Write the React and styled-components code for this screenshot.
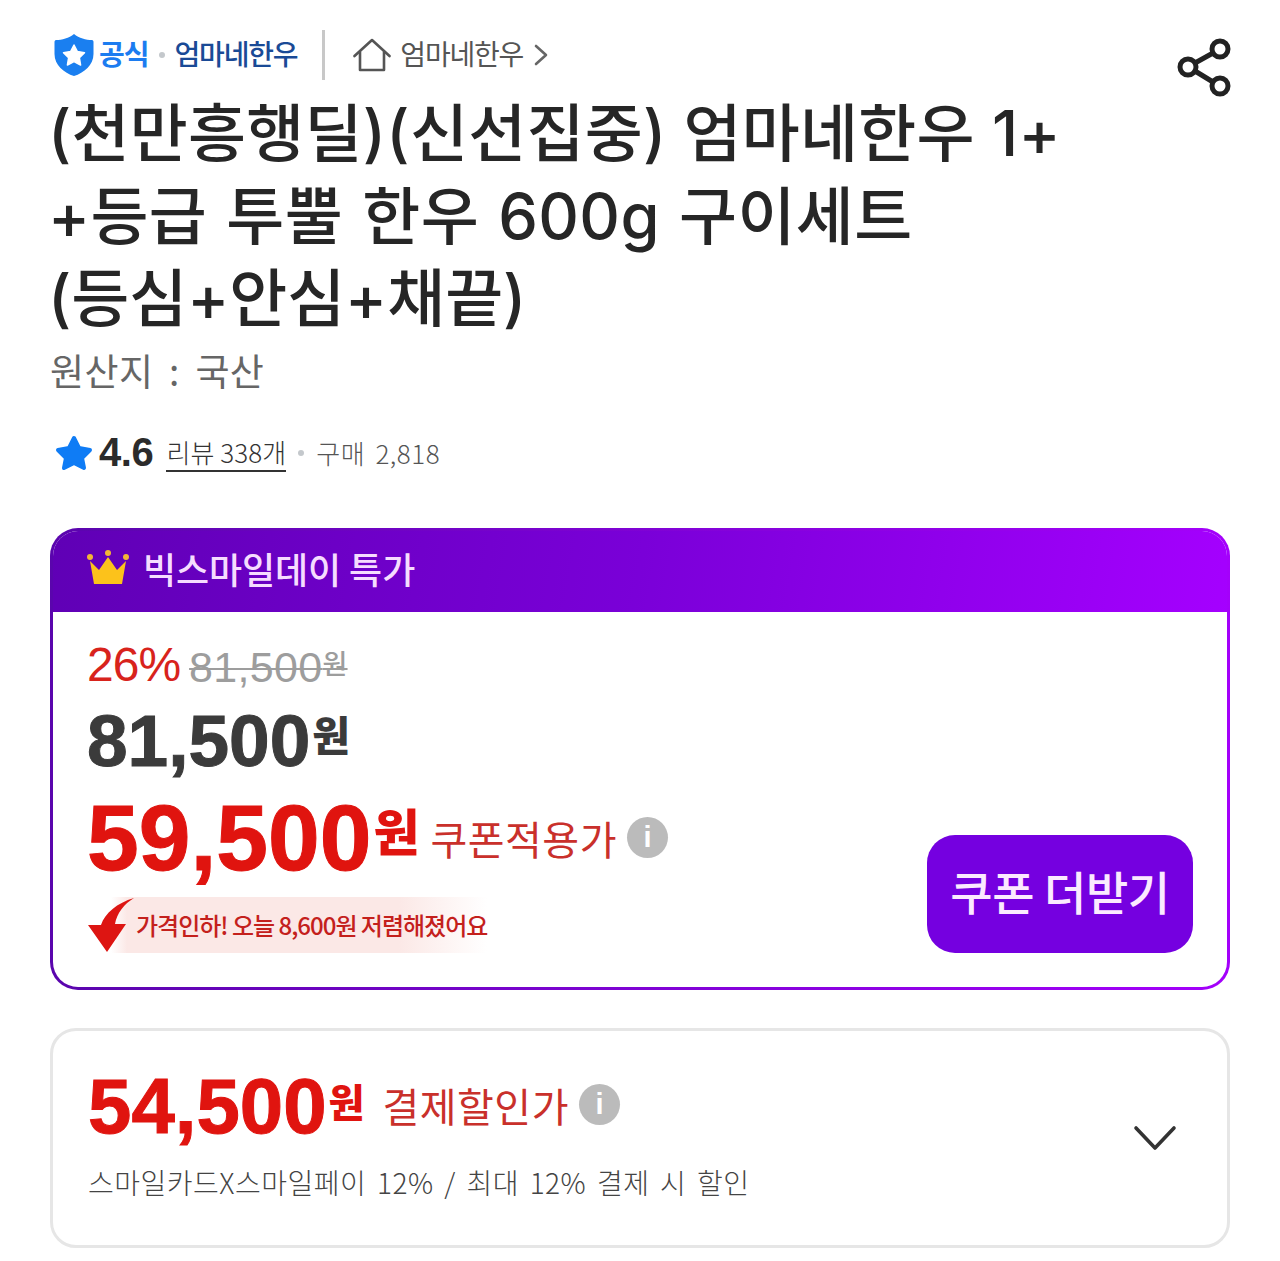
import React from 'react';
import styled, { createGlobalStyle } from 'styled-components';

const GlobalStyle = createGlobalStyle`
  html, body { margin: 0; padding: 0; background: #fff; }
  body { font-family: "Noto Sans CJK KR", "Noto Sans", sans-serif; }
`;

const Page = styled.div`
  width: 1280px;
  height: 1261px;
  box-sizing: border-box;
  padding: 28px 50px 0;
  overflow: hidden;
`;

const TopRow = styled.div`
  display: flex;
  align-items: center;
  height: 54px;
  padding-left: 4px;
`;

const TopText = styled.span`
  margin-top: -4px;
  font-size: 28px;
  letter-spacing: -1px;
  white-space: nowrap;
`;

const OfficialLabel = styled(TopText)`
  margin-left: 5px;
  font-weight: 700;
  color: #1c7cf0;
`;

const SmallDot = styled.span`
  width: 6px;
  height: 6px;
  margin: ${(p) => p.$margin || '0 10px'};
  border-radius: 50%;
  background: #c4c8cc;
`;

const BrandName = styled(TopText)`
  font-weight: 500;
  letter-spacing: -1.2px;
  color: #1a4a96;
`;

const Divider = styled.span`
  width: 3px;
  height: 50px;
  margin: 0 28px 0 25px;
  background: #c8c8c8;
`;

const StoreName = styled(TopText)`
  margin-left: 9px;
  font-weight: 400;
  letter-spacing: -1.2px;
  color: #555;
`;

const Chevron = styled.svg`
  margin-left: 10px;
`;

const ShareIcon = styled.svg`
  margin-left: auto;
  margin-top: 26px;
  margin-right: -2px;
`;

const Title = styled.h1`
  margin: 10px 0 0 -2px;
  font-family: "Inter", "Noto Sans CJK KR", sans-serif;
  font-size: 63px;
  font-weight: 500;
  line-height: 82.5px;
  color: #262626;
`;

const TitleLine = styled.div`
  white-space: nowrap;
  letter-spacing: ${(p) => p.$spacing}px;
  word-spacing: ${(p) => p.$words || 0}px;
`;

const Origin = styled.div`
  margin-top: 5px;
  font-size: 37px;
  font-weight: 400;
  line-height: 50px;
  letter-spacing: 0.4px;
  word-spacing: 7px;
  color: #666;
`;

const StatRow = styled.div`
  display: flex;
  align-items: center;
  height: 50px;
  margin-top: 33px;
  padding-left: 5px;
`;

const Score = styled.span`
  margin-left: 6px;
  font-family: "Liberation Sans", sans-serif;
  font-size: 40px;
  font-weight: 700;
  letter-spacing: -0.4px;
  color: #2b2b2b;
`;

const ReviewLink = styled.span`
  margin-left: 13px;
  font-size: 26px;
  font-weight: 300;
  line-height: 36px;
  letter-spacing: 0.1px;
  color: #333;
  border-bottom: 2px solid #333;
`;

const PurchaseText = styled.span`
  font-size: 26px;
  font-weight: 300;
  letter-spacing: 0.5px;
  word-spacing: 4px;
  color: #555;
`;

const DealCard = styled.section`
  margin-top: 50px;
  height: 462px;
  box-sizing: border-box;
  border: 3px solid transparent;
  border-radius: 28px;
  background:
    linear-gradient(#fff, #fff) padding-box,
    linear-gradient(90deg, #5a05ad 0%, #a400fb 100%) border-box;
  overflow: hidden;
`;

const DealHeader = styled.header`
  display: flex;
  align-items: center;
  height: 84px;
  margin: -3px -3px 0;
  padding: 0 0 0 36px;
  background: linear-gradient(100deg, #5f00b5 0%, #7a00d8 50%, #a500ff 100%);
`;

const DealTitle = styled.span`
  margin-left: 13px;
  margin-top: -4px;
  font-size: 36px;
  font-weight: 500;
  letter-spacing: -0.1px;
  color: #f6dcff;
`;

const CrownIcon = styled.svg`
  margin-top: -4px;
`;

const DealBody = styled.div`
  display: flex;
  justify-content: space-between;
  align-items: flex-end;
  padding: 25px 34px 35px;
`;

const PriceColumn = styled.div`
  display: flex;
  flex-direction: column;
  padding-bottom: ${(p) => p.$bottom || 0}px;
`;

const OriginalRow = styled.div`
  display: flex;
  align-items: center;
  height: 56px;
`;

const DiscountRate = styled.span`
  font-family: "Liberation Sans", sans-serif;
  font-size: 48px;
  letter-spacing: -1px;
  color: #d8231c;
`;

const StrikePrice = styled.span`
  margin-left: 9px;
  margin-top: 6px;
  font-family: "Liberation Sans", sans-serif;
  font-size: 43px;
  letter-spacing: 0.3px;
  color: #9d9d9d;
  text-decoration: line-through;
  text-decoration-thickness: 2px;

  small {
    font-family: "Noto Sans CJK KR", sans-serif;
    font-size: 27px;
    font-weight: 500;
    vertical-align: 8px;
  }
`;

const PriceLine = styled.div`
  display: flex;
  align-items: center;
  margin-top: ${(p) => p.$top || 0}px;
`;

const Amount = styled.span`
  font-family: "Liberation Sans", sans-serif;
  font-size: ${(p) => p.$size}px;
  line-height: ${(p) => p.$line}px;
  font-weight: 700;
  color: ${(p) => p.$color};
  -webkit-text-stroke: 1px ${(p) => p.$color};

  small {
    margin-left: 2px;
    font-family: "Noto Sans CJK KR", sans-serif;
    font-size: ${(p) => p.$won}px;
    font-weight: 800;
    -webkit-text-stroke: 0;
    vertical-align: ${(p) => Math.round(p.$size * 0.2)}px;
  }
`;

const PriceLabel = styled.span`
  margin-left: ${(p) => p.$left || 11}px;
  margin-top: ${(p) => p.$drop}px;
  font-size: 40px;
  font-weight: 400;
  letter-spacing: 0.5px;
  color: #c9302b;
`;

const InfoBadge = styled.span`
  display: inline-flex;
  align-items: center;
  justify-content: center;
  width: 41px;
  height: 41px;
  margin-left: 10px;
  margin-top: ${(p) => p.$drop}px;
  border-radius: 50%;
  background: #bbb;
  color: #fff;
  font-family: "Liberation Sans", sans-serif;
  font-size: 29px;
  font-weight: 700;
`;

const DropNote = styled.div`
  display: flex;
  align-items: center;
  position: relative;
  width: 400px;
  height: 56px;
  margin-top: 9px;
  padding-left: 48px;
  box-sizing: border-box;
  background: linear-gradient(90deg, #fff 0%, #fff 6%, #fbe8e6 10%, #fbe8e6 78%, #fff 100%);
`;

const DropArrow = styled.svg`
  position: absolute;
  left: 0;
  top: 0;
`;

const DropText = styled.span`
  margin-left: 1px;
  font-size: 24px;
  font-weight: 500;
  letter-spacing: -1px;
  color: #c4201c;
  white-space: nowrap;
`;

const CouponButton = styled.button`
  width: 266px;
  height: 118px;
  padding: 0 0 8px;
  border: none;
  border-radius: 28px;
  background: #7500e0;
  color: #fbeaff;
  font-family: inherit;
  font-size: 46px;
  font-weight: 500;
  letter-spacing: -0.4px;
`;

const PayCard = styled.section`
  display: flex;
  justify-content: space-between;
  align-items: center;
  height: 220px;
  margin-top: 38px;
  box-sizing: border-box;
  padding: 0 50px 0 35px;
  border: 3px solid #e6e6e6;
  border-radius: 26px;
`;

const PayNote = styled.div`
  margin-top: 14px;
  font-size: 28px;
  font-weight: 300;
  letter-spacing: 0.5px;
  word-spacing: 4px;
  color: #444;
`;

export default function App() {
  return (
    <>
      <GlobalStyle />
      <Page>
        <TopRow>
          <svg width="40" height="44" viewBox="0 0 40 44">
            <path
              d="M20 1 C25 5 32 7 38 7 C39 7 39.5 8 39.5 9 L39.5 21 C39.5 32 30 40 20 43 C10 40 .5 32 .5 21 L.5 9 C.5 8 1 7 2 7 C8 7 15 5 20 1 Z"
              fill="#1a7ff0"
            />
            <path
              d="M20 12 L23.4 18.6 L30.5 19.7 L25.4 24.8 L26.6 32 L20 28.6 L13.4 32 L14.6 24.8 L9.5 19.7 L16.6 18.6 Z"
              fill="#fff"
              stroke="#fff"
              strokeWidth="1.5"
              strokeLinejoin="round"
            />
          </svg>
          <OfficialLabel>공식</OfficialLabel>
          <SmallDot />
          <BrandName>엄마네한우</BrandName>
          <Divider />
          <svg width="38" height="34" viewBox="0 0 38 34" fill="none" stroke="#555" strokeWidth="2.6" strokeLinejoin="round" strokeLinecap="round">
            <path d="M1.5 18 L19 2 L36.5 18" />
            <path d="M7 14 L7 32 L31 32 L31 14" />
          </svg>
          <StoreName>엄마네한우</StoreName>
          <Chevron width="16" height="24" viewBox="0 0 16 24" fill="none" stroke="#666" strokeWidth="2.6" strokeLinecap="round" strokeLinejoin="round">
            <path d="M3 3 L13 12 L3 21" />
          </Chevron>
          <ShareIcon width="56" height="60" viewBox="0 0 56 60" fill="none" stroke="#222" strokeWidth="5">
            <circle cx="12" cy="29" r="8" />
            <circle cx="44" cy="11" r="8" />
            <circle cx="44" cy="48" r="8" />
            <path d="M19 25 L37 15 M19 33 L37 44" />
          </ShareIcon>
        </TopRow>

        <Title>
          <TitleLine $spacing={0.3}>(천만흥행딜)(신선집중) 엄마네한우 1+</TitleLine>
          <TitleLine $spacing={0.4} $words={2}>+등급 투뿔 한우 600g 구이세트</TitleLine>
          <TitleLine $spacing={0}>(등심+안심+채끝)</TitleLine>
        </Title>
        <Origin>원산지 : 국산</Origin>

        <StatRow>
          <svg width="38" height="36" viewBox="0 0 38 36">
            <path
              d="M19 3 L24 13 L35 15 L27 23 L29 33 L19 28 L9 33 L11 23 L3 15 L14 13 Z"
              fill="#0f7cf5"
              stroke="#0f7cf5"
              strokeWidth="4"
              strokeLinejoin="round"
            />
          </svg>
          <Score>4.6</Score>
          <ReviewLink>리뷰 338개</ReviewLink>
          <SmallDot $margin="0 12px" />
          <PurchaseText>구매 2,818</PurchaseText>
        </StatRow>

        <DealCard>
          <DealHeader>
            <CrownIcon width="44" height="36" viewBox="0 0 44 36">
              <circle cx="4" cy="7" r="3" fill="#f2b636" />
              <circle cx="22" cy="3" r="3" fill="#f2b636" />
              <circle cx="40" cy="7" r="3" fill="#f2b636" />
              <path d="M4 11 L13 20 L22 7 L31 20 L40 11 L36 34 L8 34 Z" fill="#fcc21b" />
            </CrownIcon>
            <DealTitle>빅스마일데이 특가</DealTitle>
          </DealHeader>
          <DealBody>
            <PriceColumn>
              <OriginalRow>
                <DiscountRate>26%</DiscountRate>
                <StrikePrice>
                  81,500<small>원</small>
                </StrikePrice>
              </OriginalRow>
              <PriceLine $top={-2}>
                <Amount $size={73} $line={84} $won={41} $color="#3b3b3b">
                  81,500<small>원</small>
                </Amount>
              </PriceLine>
              <PriceLine $top={-4}>
                <Amount $size={93} $line={100} $won={50} $color="#e0140f">
                  59,500<small>원</small>
                </Amount>
                <PriceLabel $drop={9}>쿠폰적용가</PriceLabel>
                <InfoBadge $drop={9}>i</InfoBadge>
              </PriceLine>
              <DropNote>
                <DropArrow width="48" height="56" viewBox="0 0 48 56">
                  <path d="M47 1 C30 6 18 16 14 28 L1 28 L20 55 L39 27 L28 27 C30 16 37 7 47 1 Z" fill="#dd1512" />
                </DropArrow>
                <DropText>가격인하! 오늘 8,600원 저렴해졌어요</DropText>
              </DropNote>
            </PriceColumn>
            <CouponButton>쿠폰 더받기</CouponButton>
          </DealBody>
        </DealCard>

        <PayCard>
          <PriceColumn $bottom={16}>
            <PriceLine>
              <Amount $size={78} $line={84} $won={39} $color="#e0140f">
                54,500<small>원</small>
              </Amount>
              <PriceLabel $left={18} $drop={4}>결제할인가</PriceLabel>
              <InfoBadge $drop={4}>i</InfoBadge>
            </PriceLine>
            <PayNote>스마일카드X스마일페이 12% / 최대 12% 결제 시 할인</PayNote>
          </PriceColumn>
          <svg width="44" height="28" viewBox="0 0 44 28" fill="none" stroke="#333" strokeWidth="3.6" strokeLinecap="round" strokeLinejoin="round">
            <path d="M3 4 L22 24 L41 4" />
          </svg>
        </PayCard>
      </Page>
    </>
  );
}
